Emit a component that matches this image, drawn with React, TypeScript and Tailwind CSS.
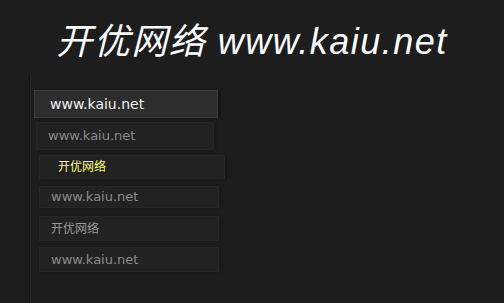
import React from "react";

const items = [
  { label: "www.kaiu.net", cls: "ml-[3px] mt-[15px] w-[184px] h-[28px] pl-[15px] bg-[#2d2d2d] border-[#3a3a3a] text-[14px] text-[#f2f2f2] shadow-[3px_0_2px_#151515]" },
  { label: "www.kaiu.net", cls: "ml-[5px] mt-[4px] w-[178px] h-[28px] pl-[11px] bg-[#222222] border-[#272727] text-[13px] text-[#8a8a8a] shadow-[2px_0_2px_#181818]" },
  { label: "开优网络", cls: "ml-[8px] mt-[5px] w-[186px] h-[24px] pl-[18px] bg-[#222222] border-[#272727] text-[12px] text-[#ffff66] shadow-[3px_0_2px_#181818]" },
  { label: "www.kaiu.net", cls: "ml-[8px] mt-[7px] w-[180px] h-[22px] pl-[11px] bg-[#222222] border-[#272727] text-[13px] text-[#8a8a8a] shadow-[2px_0_2px_#181818]" },
  { label: "开优网络", cls: "ml-[8px] mt-[8px] w-[180px] h-[25px] pl-[11px] bg-[#222222] border-[#272727] text-[12px] text-[#999999] shadow-[2px_0_2px_#181818]" },
  { label: "www.kaiu.net", cls: "ml-[8px] mt-[6px] w-[180px] h-[25px] pl-[11px] bg-[#222222] border-[#272727] text-[13px] text-[#8a8a8a] shadow-[2px_0_2px_#181818]" },
];

export default function App() {
  return (
    <div className="w-[504px] h-[303px] bg-[#1d1d1d] overflow-hidden flex flex-col">
      <h1 className="pt-[24px] text-center text-[36px] leading-none italic text-white font-['Liberation_Sans','Noto_Sans_CJK_SC',sans-serif] tracking-[1.5px]">
        开优网络 www.kaiu.net
      </h1>
      <div className="flex flex-1 mt-[15px]">
        <div className="w-[29px]" />
        <div className="w-[2px] bg-[#141414] border-r border-[#262626]" />
        <ul className="flex flex-col">
          {items.map((it, i) => (
            <li
              key={i}
              className={`flex items-center border font-['DejaVu_Sans','Noto_Sans_CJK_SC',sans-serif] ${it.cls}`}
            >
              {it.label}
            </li>
          ))}
        </ul>
      </div>
    </div>
  );
}
